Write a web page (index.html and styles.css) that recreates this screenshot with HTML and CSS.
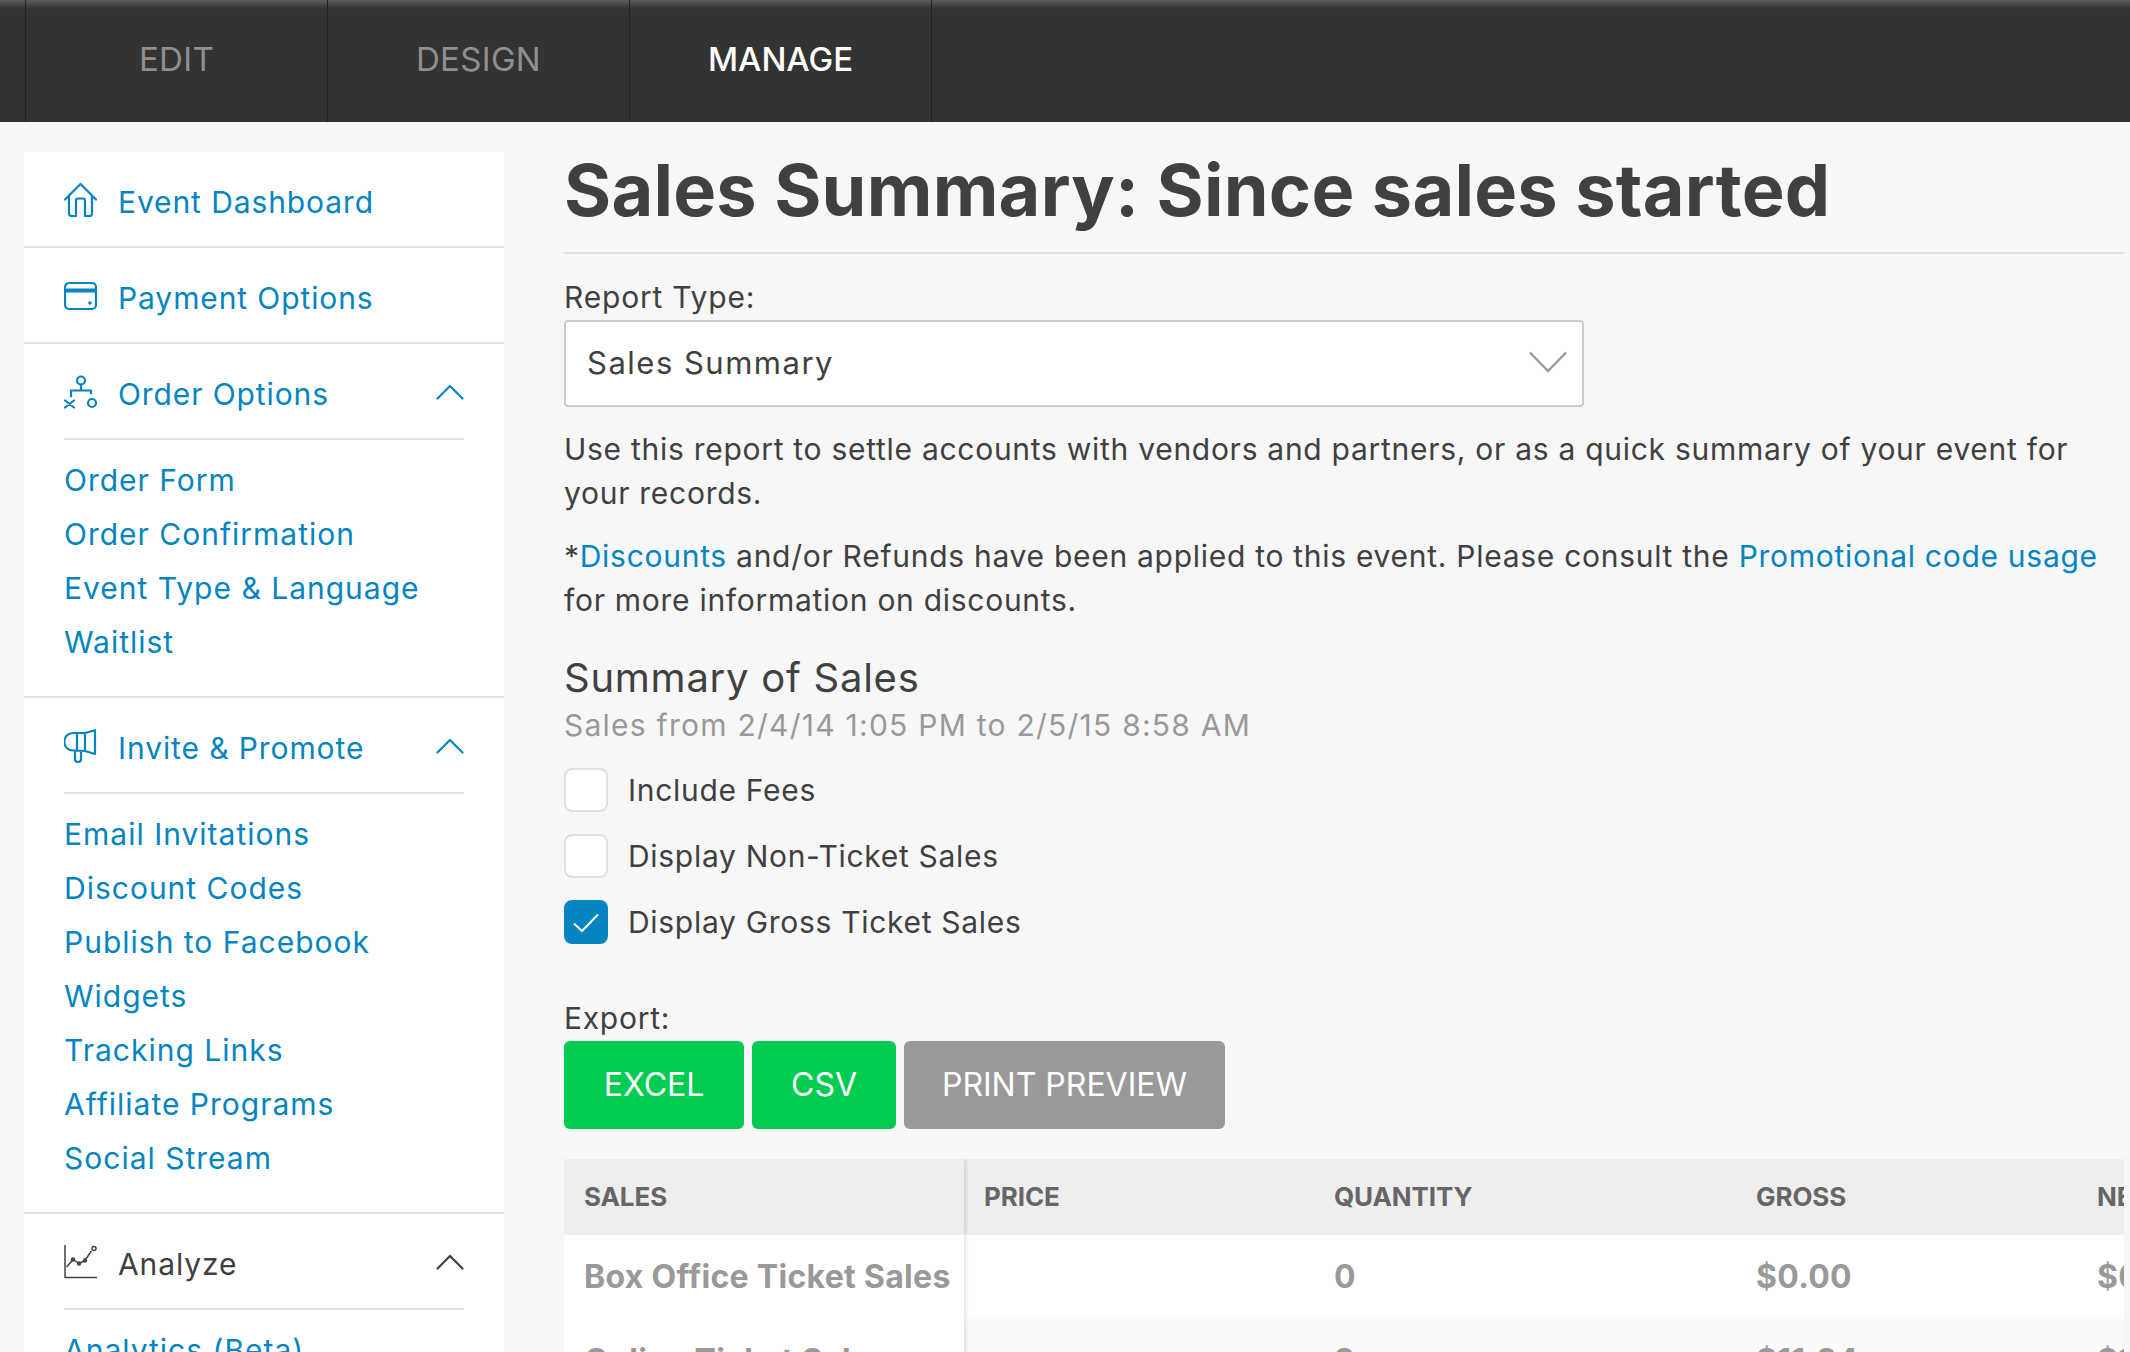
FILE: index.html
```html
<!DOCTYPE html>
<html lang="en">
<head>
<meta charset="utf-8">
<title>Sales Summary</title>
<link rel="stylesheet" href="styles.css">
</head>
<body>
<nav class="topbar">
  <a class="tab">EDIT</a>
  <a class="tab">DESIGN</a>
  <a class="tab tab-active">MANAGE</a>
</nav>
<div class="page">
  <aside class="sidebar">
    <div class="side-row">
      <svg class="icon" viewBox="0 0 33 34"><path d="M1 16.500 16.500 1 32 16.500M5 13v17.500a2.500 2.500 0 0 0 2.500 2.500h4.500V17.500a2 2 0 0 1 2-2h5a2 2 0 0 1 2 2V33h4.500a2.500 2.500 0 0 0 2.500-2.500V13"/></svg>
      <a class="side-link">Event Dashboard</a>
    </div>
    <div class="side-row">
      <svg class="icon icon-card" viewBox="0 0 33 28"><rect x="1" y="1" width="31" height="26" rx="4"/><path class="thick" d="M1 8.500h31"/><circle class="dot" cx="26" cy="21" r="1.800"/></svg>
      <a class="side-link">Payment Options</a>
    </div>
    <section class="side-group">
      <div class="group-head">
        <svg class="icon" viewBox="0 0 33 33"><circle cx="17" cy="5" r="4"/><path d="M17 9v6M7 21v-6h20v3M1 25l9 7M10 25l-9 7"/><circle cx="28" cy="27.500" r="4"/></svg>
        <a class="side-link">Order Options</a>
        <svg class="chev" viewBox="0 0 28 16"><path d="M1.500 14.500 14 2l12.500 12.500"/></svg>
      </div>
      <ul class="sub-list">
        <li><a>Order Form</a></li>
        <li><a>Order Confirmation</a></li>
        <li><a>Event Type &amp; Language</a></li>
        <li><a>Waitlist</a></li>
      </ul>
    </section>
    <section class="side-group">
      <div class="group-head">
        <svg class="icon" viewBox="0 0 33 34"><path d="M21 4 31 1.200V25L21 22ZM21 4H9a8 8 0 0 0 0 17.500l12 .5M13 4v18M11 22v8a3 3 0 0 0 6 0v-8"/></svg>
        <a class="side-link">Invite &amp; Promote</a>
        <svg class="chev" viewBox="0 0 28 16"><path d="M1.500 14.500 14 2l12.500 12.500"/></svg>
      </div>
      <ul class="sub-list">
        <li><a>Email Invitations</a></li>
        <li><a>Discount Codes</a></li>
        <li><a>Publish to Facebook</a></li>
        <li><a>Widgets</a></li>
        <li><a>Tracking Links</a></li>
        <li><a>Affiliate Programs</a></li>
        <li><a>Social Stream</a></li>
      </ul>
    </section>
    <section class="side-group">
      <div class="group-head group-dark">
        <svg class="icon" viewBox="0 0 33 33"><path d="M1 0v32h32M3 21l6-7 6 4 6-3 6-9"/><circle cx="9" cy="14" r="1.500"/><circle cx="15" cy="18" r="1.500"/><circle cx="21" cy="15" r="1.500"/><circle cx="30" cy="3" r="2"/></svg>
        <span class="side-link">Analyze</span>
        <svg class="chev" viewBox="0 0 28 16"><path d="M1.500 14.500 14 2l12.500 12.500"/></svg>
      </div>
      <ul class="sub-list">
        <li><a>Analytics (Beta)</a></li>
      </ul>
    </section>
  </aside>
  <main class="content">
    <h1 class="title">Sales Summary: Since sales started</h1>
    <label class="field-label">Report Type:</label>
    <div class="select">
      <span>Sales Summary</span>
      <svg class="select-arrow" viewBox="0 0 38 22"><path d="M1 1.500 19 20 37 1.500"/></svg>
    </div>
    <p class="copy">Use this report to settle accounts with vendors and partners, or as a quick summary of your event for your records.</p>
    <p class="copy">*<a>Discounts</a> and/or Refunds have been applied to this event. Please consult the <a>Promotional code usage</a> for more information on discounts.</p>
    <h2 class="subhead">Summary of Sales</h2>
    <div class="range">Sales from 2/4/14 1:05 PM to 2/5/15 8:58 AM</div>
    <div class="checks">
      <div class="check"><span class="box"></span>Include Fees</div>
      <div class="check"><span class="box"></span>Display Non-Ticket Sales</div>
      <div class="check"><span class="box box-on"><svg viewBox="0 0 26 20"><path d="M1 10.500 9 18 25 1.500"/></svg></span>Display Gross Ticket Sales</div>
    </div>
    <div class="export-label">Export:</div>
    <div class="buttons">
      <a class="btn btn-excel">EXCEL</a>
      <a class="btn btn-csv">CSV</a>
      <a class="btn btn-print">PRINT PREVIEW</a>
    </div>
    <div class="table-wrap">
      <table class="sales">
        <colgroup><col class="c1"><col class="c2"><col class="c3"><col class="c4"><col class="c5"></colgroup>
        <thead><tr><th class="first">SALES</th><th>PRICE</th><th>QUANTITY</th><th>GROSS</th><th>NET</th></tr></thead>
        <tbody>
          <tr><td class="first">Box Office Ticket Sales</td><td></td><td>0</td><td>$0.00</td><td>$0.00</td></tr>
          <tr class="alt"><td class="first">Online Ticket Sales</td><td></td><td>3</td><td>$11.24</td><td>$11.24</td></tr>
        </tbody>
      </table>
    </div>
  </main>
</div>
</body>
</html>
```
FILE: styles.css
```css
* { box-sizing: border-box; }
html, body { margin: 0; height: 1352px; overflow: hidden; }
body { background: #f7f7f7; color: #404040; font-family: Inter, Roboto, sans-serif; font-size: 30px; letter-spacing: .72px; }
a { color: #0584c2; }

.topbar { display: flex; height: 122px; padding-left: 25px; background: linear-gradient(#5a5a5a 0, #333 9px); }
.tab { width: 302px; display: flex; align-items: center; justify-content: center; border-left: 1px solid #222; color: #8f8f8f; font-size: 33px; letter-spacing: .3px; padding-bottom: 4px; }
.tab-active { color: #fff; border-right: 1px solid #222; width: 303px; font-weight: 500; letter-spacing: 0; }

.page { display: flex; padding: 30px 6px 0 24px; }
.sidebar { width: 480px; flex: none; background: #fff; }
.side-row { display: flex; align-items: center; gap: 21px; height: 96px; padding: 0 40px; border-bottom: 2px solid #e0e0e0; }
.side-link { color: #0584c2; padding-top: 6px; letter-spacing: .9px; }
.icon { width: 33px; height: 34px; flex: none; margin-top: 1px; fill: none; stroke: #0584c2; stroke-width: 2.200; stroke-linecap: round; stroke-linejoin: round; }
.icon .thick { stroke-width: 4; stroke-linecap: butt; }
.icon .dot { fill: #0584c2; stroke: none; }
.side-group { padding: 0 40px 26px; border-bottom: 2px solid #e0e0e0; }
.group-head { display: flex; align-items: center; gap: 21px; height: 96px; border-bottom: 2px solid #e0e0e0; }
.group-head .chev { margin-left: auto; margin-top: 1px; width: 28px; height: 16px; fill: none; stroke: #0584c2; stroke-width: 2.200; stroke-linecap: round; stroke-linejoin: round; }
.group-head.group-dark .chev { stroke: #404040; }
.group-dark .icon { stroke: #404040; stroke-width: 1.500; }
.group-dark .side-link { color: #404040; }
.sub-list { list-style: none; margin: 13px 0 0; padding: 0 0 1px; letter-spacing: 1px; }
.sub-list li { height: 54px; display: flex; align-items: center; }

.content { width: 1560px; margin-left: 60px; flex: none; margin-top: -30px; padding-top: 30px; }
.title { margin: 0; height: 102px; border-bottom: 2px solid #e0e0e0; font-size: 72px; line-height: 76px; font-weight: 700; letter-spacing: .25px; color: #404040; }
.field-label { display: block; margin-top: 22px; line-height: 42px; letter-spacing: .8px; }
.select { width: 1020px; height: 87px; margin-top: 2px; padding: 0 21px 3px; display: flex; align-items: center; justify-content: space-between; background: #fff; border: 2px solid #ccc; border-radius: 4px; font-size: 31px; letter-spacing: 1.500px; }
.select-arrow { width: 38px; height: 22px; fill: none; stroke: #999; stroke-width: 2.400; margin-right: -6px; }
.copy { margin: 21px 0 0; line-height: 43.500px; }
.copy + .copy { margin-top: 20px; }
.subhead { margin: 31px 0 0; font-size: 40px; line-height: 50px; font-weight: 400; letter-spacing: .75px; }
.range { color: #999; line-height: 44px; letter-spacing: 1.250px; }
.checks { margin-top: 21px; display: flex; flex-direction: column; gap: 22px; }
.check { display: flex; align-items: center; height: 44px; gap: 20px; letter-spacing: .7px; }
.box { width: 44px; height: 44px; flex: none; background: #fff; border: 2px solid #e0e0e0; border-radius: 8px; }
.box-on { display: flex; align-items: center; justify-content: center; background: #0584c2; border-color: #0584c2; }
.box-on svg { width: 26px; height: 20px; fill: none; stroke: #fff; stroke-width: 2; margin-top: 2px; }
.export-label { margin-top: 53px; line-height: 42px; }
.buttons { display: flex; gap: 8px; margin-top: 2px; }
.btn { height: 88px; display: flex; align-items: center; justify-content: center; color: #fff; border-radius: 6px; font-size: 32px; letter-spacing: 0; padding-bottom: 2px; }
.btn-excel { width: 180px; background: #00cc52; }
.btn-csv { width: 144px; background: #00cc52; }
.btn-print { width: 321px; background: #999; }

.table-wrap { margin-top: 30px; width: 1560px; overflow: hidden; }
.sales { width: 1660px; table-layout: fixed; border-collapse: separate; border-spacing: 0; }
.c1 { width: 400px; } .c2 { width: 350px; } .c3 { width: 422px; } .c4 { width: 341px; } .c5 { width: 147px; }
.sales th { height: 76px; background: #eee; color: #666; text-align: left; padding: 0 20px 2px; font-size: 26px; font-weight: 700; letter-spacing: -.1px; }
.sales td { height: 84px; background: #fff; color: #999; padding: 0 20px 2px; font-size: 32px; font-weight: 700; letter-spacing: .3px; white-space: nowrap; }
.sales .alt td { background: #fafafa; }
.sales .first { position: relative; z-index: 1; box-shadow: 2px 0 4px rgba(0,0,0,.12); clip-path: inset(0 -8px 0 0); }
.sales .alt td.first { background: #fff; }
```
